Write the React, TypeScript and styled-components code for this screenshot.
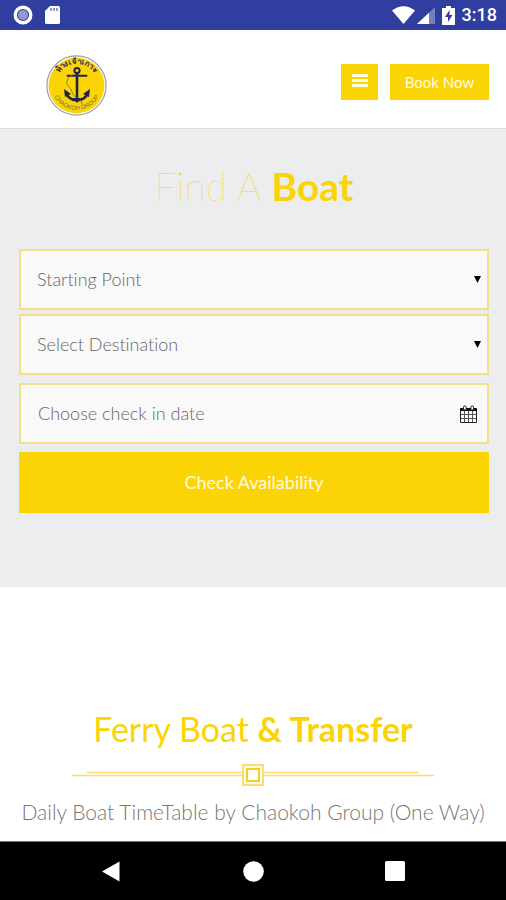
import React from "react";
import styled, { createGlobalStyle } from "styled-components";

const yellow = "#fbd405";

const GlobalStyle = createGlobalStyle`
  *, *::before, *::after { box-sizing: border-box; }
  body {
    margin: 0;
    background: #fff;
    font-family: Lato, "Open Sans", sans-serif;
    font-variant-ligatures: none;
  }
  h1, h2, p { margin: 0; }
  button, input, select { font: inherit; font-variant-ligatures: none; }
`;

const Screen = styled.div`
  display: flex;
  flex-direction: column;
  min-height: 100vh;
`;

const StatusBar = styled.div`
  display: flex;
  align-items: center;
  justify-content: space-between;
  height: 30px;
  padding: 0 9px 0 13px;
  background: #303f9f;
  color: #fff;
  font: 500 18px/30px Roboto, sans-serif;
`;

const StatusGroup = styled.div<{ $gap: number }>`
  display: flex;
  align-items: center;
  gap: ${(p) => p.$gap}px;
  svg { display: block; }
`;

const Header = styled.header`
  display: flex;
  align-items: center;
  justify-content: space-between;
  height: 99px;
  padding: 5px 17px 0 46px;
  background: #fff;
  border-bottom: 1px solid #d9dbdc;
  svg { display: block; }
`;

const HomeLink = styled.a`
  display: block;
  margin-top: 8px;
`;

const HeaderActions = styled.div`
  display: flex;
  gap: 12px;
`;

const SolidButton = styled.button`
  display: flex;
  align-items: center;
  justify-content: center;
  height: 36px;
  padding: 0 14px;
  border: 0;
  background: ${yellow};
  color: #fffbe0;
  font-size: 15px;
  cursor: pointer;
`;

const MenuButton = styled(SolidButton)`
  width: 37px;
  padding: 0 0 2px;
`;

const BookButton = styled(SolidButton)`
  width: 99px;
  padding: 0;
`;

const Finder = styled.section`
  padding: 33px 17px 74px 19px;
  background: #ebedee;
`;

const FinderTitle = styled.h1`
  color: ${yellow};
  font-size: 39px;
  font-weight: 100;
  line-height: 48px;
  text-align: center;
  strong { font-weight: 700; }
`;

const Form = styled.form`
  display: flex;
  flex-direction: column;
  gap: 8px;
  margin-top: 39px;
`;

const SelectGroup = styled.div`
  display: flex;
  flex-direction: column;
  gap: 4px;
`;

const Field = styled.div`
  position: relative;
  height: 61px;
`;

const SelectBox = styled.select`
  width: 100%;
  height: 100%;
  padding: 0 40px 2px 16px;
  border: 2px solid #f5df86;
  border-radius: 0;
  appearance: none;
  background: #f9f9f9;
  color: #666;
  font-size: 18px;
  font-weight: 300;
`;

const DateBox = styled.input`
  width: 100%;
  height: 100%;
  padding: 0 48px 2px 17px;
  border: 2px solid #f5df86;
  border-radius: 0;
  background: #f9f9f9;
  color: #666;
  font-size: 18px;
  font-weight: 300;
  &::placeholder { color: #666; opacity: 1; }
`;

const FieldIcon = styled.span<{ $inset: number }>`
  position: absolute;
  top: 0;
  bottom: 0;
  right: ${(p) => p.$inset}px;
  display: flex;
  align-items: center;
  pointer-events: none;
`;

const SubmitButton = styled(SolidButton)`
  height: 61px;
  padding-bottom: 2px;
  font-size: 18px;
`;

const Ferry = styled.main`
  flex: 1;
  display: flex;
  flex-direction: column;
  align-items: center;
  padding: 118px 17px 10px;
  background: #fff;
`;

const FerryTitle = styled.h2`
  color: ${yellow};
  font-size: 34px;
  font-weight: 400;
  line-height: 48px;
  text-align: center;
  strong { font-weight: 700; }
`;

const Divider = styled.svg`
  display: block;
  max-width: 100%;
  margin-top: 11px;
`;

const Caption = styled.p`
  margin-top: 12px;
  color: #777;
  font-size: 21px;
  font-weight: 300;
  line-height: 28px;
  text-align: center;
`;

const SystemNav = styled.nav`
  display: flex;
  align-items: center;
  justify-content: center;
  gap: 102px;
  height: 59px;
  background: #000;
  border-top: 1px solid #777;
`;

const NavButton = styled.button`
  display: flex;
  align-items: center;
  justify-content: center;
  width: 40px;
  height: 40px;
  padding: 0;
  border: 0;
  background: none;
  cursor: pointer;
`;

function Logo() {
  return (
    <svg width="61" height="61" viewBox="0 0 61 61" aria-hidden="true">
      <circle cx="30.500" cy="30.500" r="29.600" fill="#fff" stroke="#9c9cae" strokeWidth="1.200" />
      <circle cx="30.500" cy="30.500" r="28" fill={yellow} />
      <path id="logo-top" d="M9.500 25.500 A21.600 21.600 0 0 1 51.500 25.500" fill="none" />
      <path id="logo-bottom" d="M5.500 34 A25.400 25.400 0 0 0 55.500 34" fill="none" />
      <text fill="#292f55" fontFamily="Noto Sans, sans-serif" fontSize="8" fontWeight="700" textAnchor="middle">
        <textPath href="#logo-top" startOffset="50%">ห้างเจ้าเกาะ</textPath>
      </text>
      <text fill="#77733a" fontFamily="Liberation Sans, sans-serif" fontSize="6" textAnchor="middle">
        <textPath href="#logo-bottom" startOffset="50%">CHAOKOH GROUP</textPath>
      </text>
      <g fill="none" stroke="#20244f">
        <circle cx="31" cy="15.500" r="2.600" strokeWidth="2" />
        <path d="M31 18V45" strokeWidth="2.600" />
        <path d="M21.500 20.800H40.500" strokeWidth="2" strokeLinecap="round" />
        <path d="M20 38C22 43 26 45 31 45.500C36 45 40 43 42 38" strokeWidth="2.600" />
        <path d="M29 19C20 22 19 28 23 32C27 35 25 40 31 43C35 45 36 47 36 50" stroke="#857827" strokeWidth=".9" />
      </g>
      <path d="M18 34L25 39L19 42ZM44 34L37 39L43 42ZM27 43H35L31 48Z" fill="#20244f" />
    </svg>
  );
}

function CalendarIcon() {
  return (
    <svg width="17" height="18" viewBox="0 0 17 18" aria-hidden="true">
      <path d="M.5 3.500H16.500V17.500H.5Z" fill="#fafafa" stroke="#222" />
      <path d="M.5 3H16.500V6H.5Z" fill="#111" />
      <path d="M4.500 6V17M8.500 6V17M12.500 6V17M1 9.500H16M1 13.500H16" stroke="#555" />
      <path d="M3.500 4.500V2.200A1.300 1.300 0 0 1 6.100 2.200V4.500M10.900 4.500V2.200A1.300 1.300 0 0 1 13.500 2.200V4.500" fill="#fff" stroke="#222" />
    </svg>
  );
}

function Picker({ label }: { label: string }) {
  return (
    <Field>
      <SelectBox aria-label={label} defaultValue="">
        <option value="">{label}</option>
      </SelectBox>
      <FieldIcon $inset={8}>
        <svg width="7" height="7" viewBox="0 0 7 7" aria-hidden="true">
          <path d="M0 0H7L3.500 7Z" />
        </svg>
      </FieldIcon>
    </Field>
  );
}

export default function App() {
  return (
    <Screen>
      <GlobalStyle />
      <StatusBar>
        <StatusGroup $gap={12}>
          <svg width="20" height="20" viewBox="0 0 20 20" aria-hidden="true">
            <circle cx="10" cy="10" r="7.800" fill="none" stroke="#fff" strokeWidth="3.400" />
            <circle cx="10" cy="10" r="5" fill="#929ace" />
          </svg>
          <svg width="15" height="20" viewBox="0 0 15 20" aria-hidden="true">
            <path d="M5 1H13.500Q15 1 15 2.500V17.500Q15 19 13.500 19H1.500Q0 19 0 17.500V6Z" fill="#fff" />
            <path d="M6 3V6M9 3V6M12 3V6" stroke="#7179b8" strokeWidth="1.500" />
          </svg>
        </StatusGroup>
        <StatusGroup $gap={7}>
          <StatusGroup $gap={2}>
            <svg width="23" height="18" viewBox="0 0 23 18" aria-hidden="true">
              <path d="M0 4.500Q11.500-4 23 4.500L11.500 18Z" fill="#fff" />
            </svg>
            <svg width="18" height="17" viewBox="0 0 18 17" aria-hidden="true">
              <path d="M18 0V17H0Z" fill="#747fc0" />
              <path d="M12 5.700V17H0Z" fill="#fff" />
            </svg>
          </StatusGroup>
          <svg width="13" height="19" viewBox="0 0 13 19" aria-hidden="true">
            <path d="M4 0H9V2H13V19H0V2H4Z" fill="#fff" />
            <path d="M7.500 4L3 11H6V16L10.500 9H7.500Z" fill="#303f9f" />
          </svg>
          <span>3:18</span>
        </StatusGroup>
      </StatusBar>
      <Header>
        <HomeLink href="#" aria-label="Chaokoh Group">
          <Logo />
        </HomeLink>
        <HeaderActions>
          <MenuButton type="button" aria-label="Menu">
            <svg width="16" height="13" viewBox="0 0 16 13" aria-hidden="true">
              <path d="M0 1.500H16M0 6.500H16M0 11.500H16" stroke="#fffbe0" strokeWidth="3" />
            </svg>
          </MenuButton>
          <BookButton type="button">Book Now</BookButton>
        </HeaderActions>
      </Header>
      <Finder>
        <FinderTitle>
          Find A <strong>Boat</strong>
        </FinderTitle>
        <Form onSubmit={(e) => e.preventDefault()}>
          <SelectGroup>
            <Picker label="Starting Point" />
            <Picker label="Select Destination" />
          </SelectGroup>
          <Field>
            <DateBox type="text" aria-label="Check in date" placeholder="Choose check in date" />
            <FieldIcon $inset={12}>
              <CalendarIcon />
            </FieldIcon>
          </Field>
          <SubmitButton type="submit">Check Availability</SubmitButton>
        </Form>
      </Finder>
      <Ferry>
        <FerryTitle>
          Ferry Boat <strong>&amp; Transfer</strong>
        </FerryTitle>
        <Divider width="362" height="22" viewBox="0 0 362 22" aria-hidden="true">
          <path d="M15 8.500H171M191 8.500H347M0 11.500H171M191 11.500H362" stroke="#f8dc73" strokeWidth="1.500" />
          <rect x="171" y="1" width="20" height="20" fill="#fffbe6" stroke="#f9dd75" strokeWidth="2" />
          <rect x="175" y="5" width="12" height="12" fill="#fff" stroke="#f7ce22" strokeWidth="2" />
        </Divider>
        <Caption>Daily Boat TimeTable by Chaokoh Group (One Way)</Caption>
      </Ferry>
      <SystemNav aria-label="System">
        <NavButton type="button" aria-label="Back">
          <svg width="18" height="21" viewBox="0 0 18 21" aria-hidden="true">
            <path d="M17.500 .5V20.500L0 10.500Z" fill="#fff" />
          </svg>
        </NavButton>
        <NavButton type="button" aria-label="Home">
          <svg width="21" height="21" viewBox="0 0 21 21" aria-hidden="true">
            <circle cx="10.500" cy="10.500" r="10.300" fill="#fff" />
          </svg>
        </NavButton>
        <NavButton type="button" aria-label="Recent apps">
          <svg width="20" height="20" viewBox="0 0 20 20" aria-hidden="true">
            <rect width="20" height="20" rx="1.500" fill="#fff" />
          </svg>
        </NavButton>
      </SystemNav>
    </Screen>
  );
}
